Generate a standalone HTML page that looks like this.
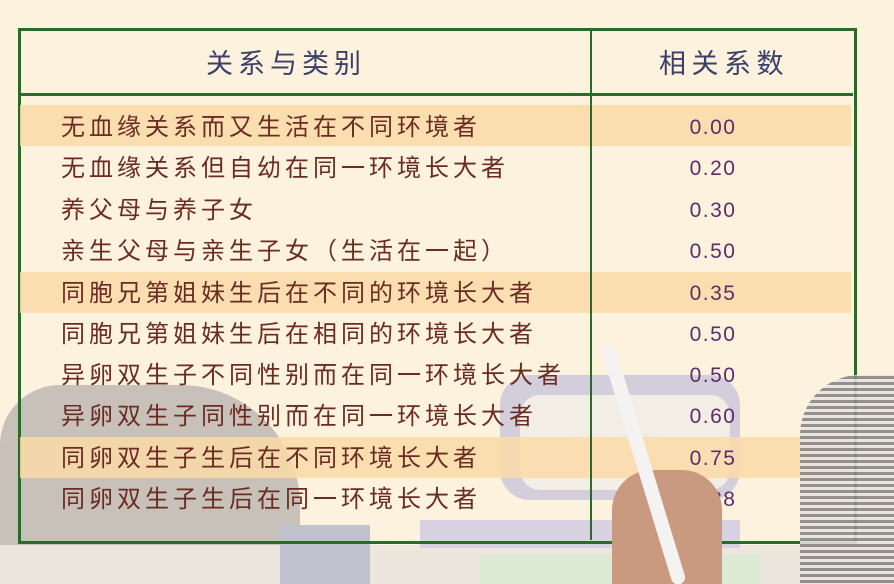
<!DOCTYPE html>
<html><head><meta charset="utf-8"><style>
html,body{margin:0;padding:0;width:894px;height:584px;overflow:hidden;}
body{background:#fcf2de;position:relative;font-family:"Liberation Sans","Noto Sans CJK SC",sans-serif;}
.abs{position:absolute;}
.row{position:absolute;left:20px;width:831px;height:41px;}
.hl{background:rgba(250,218,168,.85);}
.t{position:absolute;left:61px;font-size:24px;color:#6a2b22;line-height:41px;white-space:nowrap;letter-spacing:4px;}
.n{position:absolute;left:593px;width:240px;text-align:center;font-size:21px;color:#5d2c6a;line-height:41px;letter-spacing:1.5px;}
</style></head><body>
<div class="abs" style="left:0;top:385px;width:300px;height:200px;background:#c8c1ba;border-radius:60px 120px 0 0;"></div>
<div class="abs" style="left:0;top:545px;width:894px;height:39px;background:#ece6dc"></div>
<div class="abs" style="left:500px;top:375px;width:240px;height:125px;background:#d3cedc;border-radius:30px;"></div>
<div class="abs" style="left:520px;top:395px;width:210px;height:95px;background:#f3eee5;border-radius:20px;"></div>
<div class="abs" style="left:420px;top:520px;width:320px;height:28px;background:#d8d1e2;"></div>
<div class="abs" style="left:480px;top:555px;width:280px;height:29px;background:#dbe9d5;"></div>
<div class="abs" style="left:280px;top:525px;width:90px;height:59px;background:#bfc1cf;"></div>
<div class="abs" style="left:18px;top:28px;width:833px;height:510px;border:3px solid #2c6a2a;"></div>
<div class="abs" style="left:20px;top:93px;width:833px;height:3px;background:#2c6a2a;"></div>
<div class="abs" style="left:206px;top:30px;height:63px;line-height:68px;font-size:27px;color:#3b3f6a;letter-spacing:5px;white-space:nowrap;">关系与类别</div>
<div class="abs" style="left:592px;top:30px;width:259px;height:63px;text-align:center;line-height:68px;font-size:27px;color:#3b3f6a;letter-spacing:5.5px;padding-left:5px;box-sizing:border-box;">相关系数</div>
<div class="row hl" style="top:105px"></div>
<div class="row hl" style="top:272px"></div>
<div class="row hl" style="top:437px"></div>
<div class="abs" style="left:590px;top:30px;width:2px;height:510px;background:#2c6a2a;"></div>
<div class="t" style="top:107px">无血缘关系而又生活在不同环境者</div><div class="n" style="top:107px">0.00</div>
<div class="t" style="top:148px">无血缘关系但自幼在同一环境长大者</div><div class="n" style="top:148px">0.20</div>
<div class="t" style="top:190px">养父母与养子女</div><div class="n" style="top:190px">0.30</div>
<div class="t" style="top:231px">亲生父母与亲生子女（生活在一起）</div><div class="n" style="top:231px">0.50</div>
<div class="t" style="top:273px">同胞兄第姐妹生后在不同的环境长大者</div><div class="n" style="top:273px">0.35</div>
<div class="t" style="top:314px">同胞兄第姐妹生后在相同的环境长大者</div><div class="n" style="top:314px">0.50</div>
<div class="t" style="top:355px">异卵双生子不同性别而在同一环境长大者</div><div class="n" style="top:355px">0.50</div>
<div class="t" style="top:396px">异卵双生子同性别而在同一环境长大者</div><div class="n" style="top:396px">0.60</div>
<div class="t" style="top:438px">同卵双生子生后在不同环境长大者</div><div class="n" style="top:438px">0.75</div>
<div class="t" style="top:479px">同卵双生子生后在同一环境长大者</div><div class="n" style="top:479px">0.88</div>
<div class="abs" style="left:800px;top:375px;width:120px;height:220px;background:repeating-linear-gradient(0deg,#8a8585 0 3px,#e8e4e0 3px 6px),#aaa;border-radius:60px 0 0 0;opacity:.9"></div>
<div class="abs" style="left:612px;top:470px;width:110px;height:130px;background:#c99a7f;border-radius:40px 40px 0 0;"></div>
<div class="abs" style="left:600px;top:345px;width:14px;height:250px;background:#f5f3f2;border-radius:7px;transform:rotate(-17deg);transform-origin:top;"></div>
</body></html>
